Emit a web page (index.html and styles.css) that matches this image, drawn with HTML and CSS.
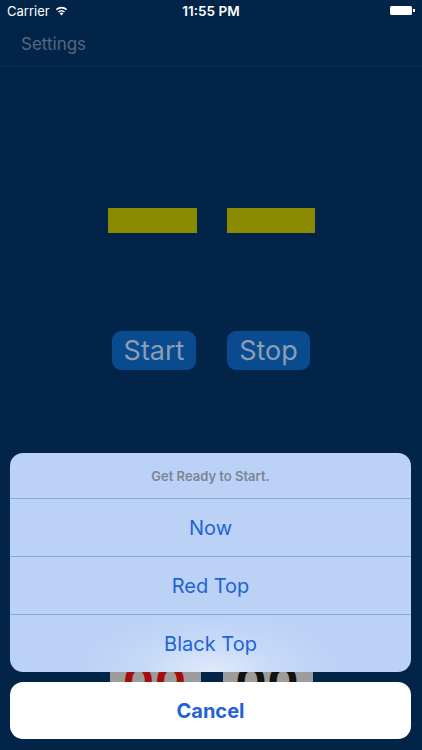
FILE: index.html
```html
<!DOCTYPE html>
<html>
<head>
<meta charset="utf-8">
<link rel="stylesheet" href="styles.css">
</head>
<body>
<div class="screen">
  <div class="status">
    <div class="status-left">
      <span>Carrier</span>
      <svg class="wifi" width="13" height="10" viewBox="0 0 13 10">
        <path d="M6.5 9.6 L4.6 7.3 A3 3 0 0 1 8.4 7.3 Z" fill="#fff"/>
        <path d="M3.5 6 A4.6 4.6 0 0 1 9.5 6" stroke="#fff" stroke-width="1.6" fill="none"/>
        <path d="M1.4 3.6 A7.6 7.6 0 0 1 11.6 3.6" stroke="#fff" stroke-width="1.6" fill="none"/>
      </svg>
    </div>
    <div class="status-time">11:55 PM</div>
    <div class="status-right">
      <span class="battery"></span><span class="nub"></span>
    </div>
  </div>
  <div class="navbar"><span class="nav-link">Settings</span></div>
  <div class="content">
    <div class="bars">
      <div class="bar bar-a"></div>
      <div class="bar bar-b"></div>
    </div>
    <div class="buttons">
      <div class="btn btn-start">Start</div>
      <div class="btn btn-stop">Stop</div>
    </div>
    <div class="cards">
      <div class="card red">00</div>
      <div class="card black">00</div>
    </div>
  </div>
  <div class="sheet-wrap">
    <div class="sheet">
      <div class="sheet-title">Get Ready to Start.</div>
      <div class="sheet-item">Now</div>
      <div class="sheet-item">Red Top</div>
      <div class="sheet-item last">Black Top</div>
    </div>
    <div class="cancel">Cancel</div>
  </div>
</div>
</body>
</html>
```
FILE: styles.css
```css
html, body {
  margin: 0;
  padding: 0;
}
body {
  background: #022449;
  font-family: Inter, "Liberation Sans", sans-serif;
}
.screen {
  position: relative;
  width: 422px;
  height: 750px;
  overflow: hidden;
  background: #022449;
}
.status {
  height: 21px;
  display: flex;
  align-items: center;
  justify-content: space-between;
  padding: 0 7px;
  color: #fff;
  font-size: 13px;
  position: relative;
}
.status-left {
  display: flex;
  align-items: center;
  gap: 5px;
  width: 120px;
}
.wifi {
  display: block;
}
.status-time {
  font-weight: 600;
  font-size: 13.5px;
}
.status-right {
  width: 120px;
  display: flex;
  justify-content: flex-end;
  align-items: center;
}
.battery {
  width: 22px;
  height: 9px;
  background: #fff;
  border-radius: 1.5px;
}
.nub {
  width: 1.5px;
  height: 3px;
  background: #fff;
  margin-left: 1px;
}
.navbar {
  height: 45px;
  display: flex;
  align-items: center;
  padding-left: 21px;
  border-bottom: 1px solid #0a2c52;
}
.nav-link {
  color: #56677d;
  font-size: 17px;
}
.content {
  display: flex;
  flex-direction: column;
  align-items: center;
}
.bars {
  margin-top: 141px;
  display: flex;
  gap: 30px;
  padding-left: 1px;
}
.bar {
  height: 25px;
  background: #8a8a00;
}
.bar-a { width: 89px; }
.bar-b { width: 88px; }
.buttons {
  margin-top: 98px;
  display: flex;
  gap: 31px;
}
.btn {
  height: 39px;
  background: #0a4b8f;
  border-radius: 9px;
  color: #8c9db3;
  font-size: 27px;
  display: flex;
  align-items: center;
  justify-content: center;
}
.btn-start { width: 84px; }
.btn-stop { width: 83px; }
.cards {
  margin-top: 289px;
  display: flex;
  gap: 22px;
}
.card {
  width: 91px;
  height: 60px;
  background: #9c9c9c;
  font-size: 46px;
  font-weight: 700;
  text-align: center;
  line-height: 46px;
  letter-spacing: 1px;
}
.card.red { color: #a50d0d; }
.card.black { color: #111; width: 90px; }
.sheet-wrap {
  position: absolute;
  left: 10px;
  right: 11px;
  top: 453px;
  display: flex;
  flex-direction: column;
  gap: 10px;
}
.sheet {
  border-radius: 13px;
  overflow: hidden;
  background: radial-gradient(ellipse 130px 60px at 50% 100%, rgba(226,236,250,0.95) 0%, rgba(210,226,248,0.5) 50%, rgba(187,211,246,0) 100%), #bbd2f6;
}
.sheet-title {
  height: 45px;
  display: flex;
  align-items: center;
  justify-content: center;
  color: #7b8594;
  font-size: 13px;
  font-weight: 600;
  border-bottom: 1px solid #8aa7de;
}
.sheet-item {
  height: 57px;
  display: flex;
  align-items: center;
  justify-content: center;
  color: #1f63d5;
  font-size: 20px;
  border-bottom: 1px solid #8aa7de;
}
.sheet-item.last {
  border-bottom: none;
}
.cancel {
  height: 57px;
  background: #fff;
  border-radius: 13px;
  display: flex;
  align-items: center;
  justify-content: center;
  color: #1f63d5;
  font-size: 20px;
  font-weight: 700;
}
```
